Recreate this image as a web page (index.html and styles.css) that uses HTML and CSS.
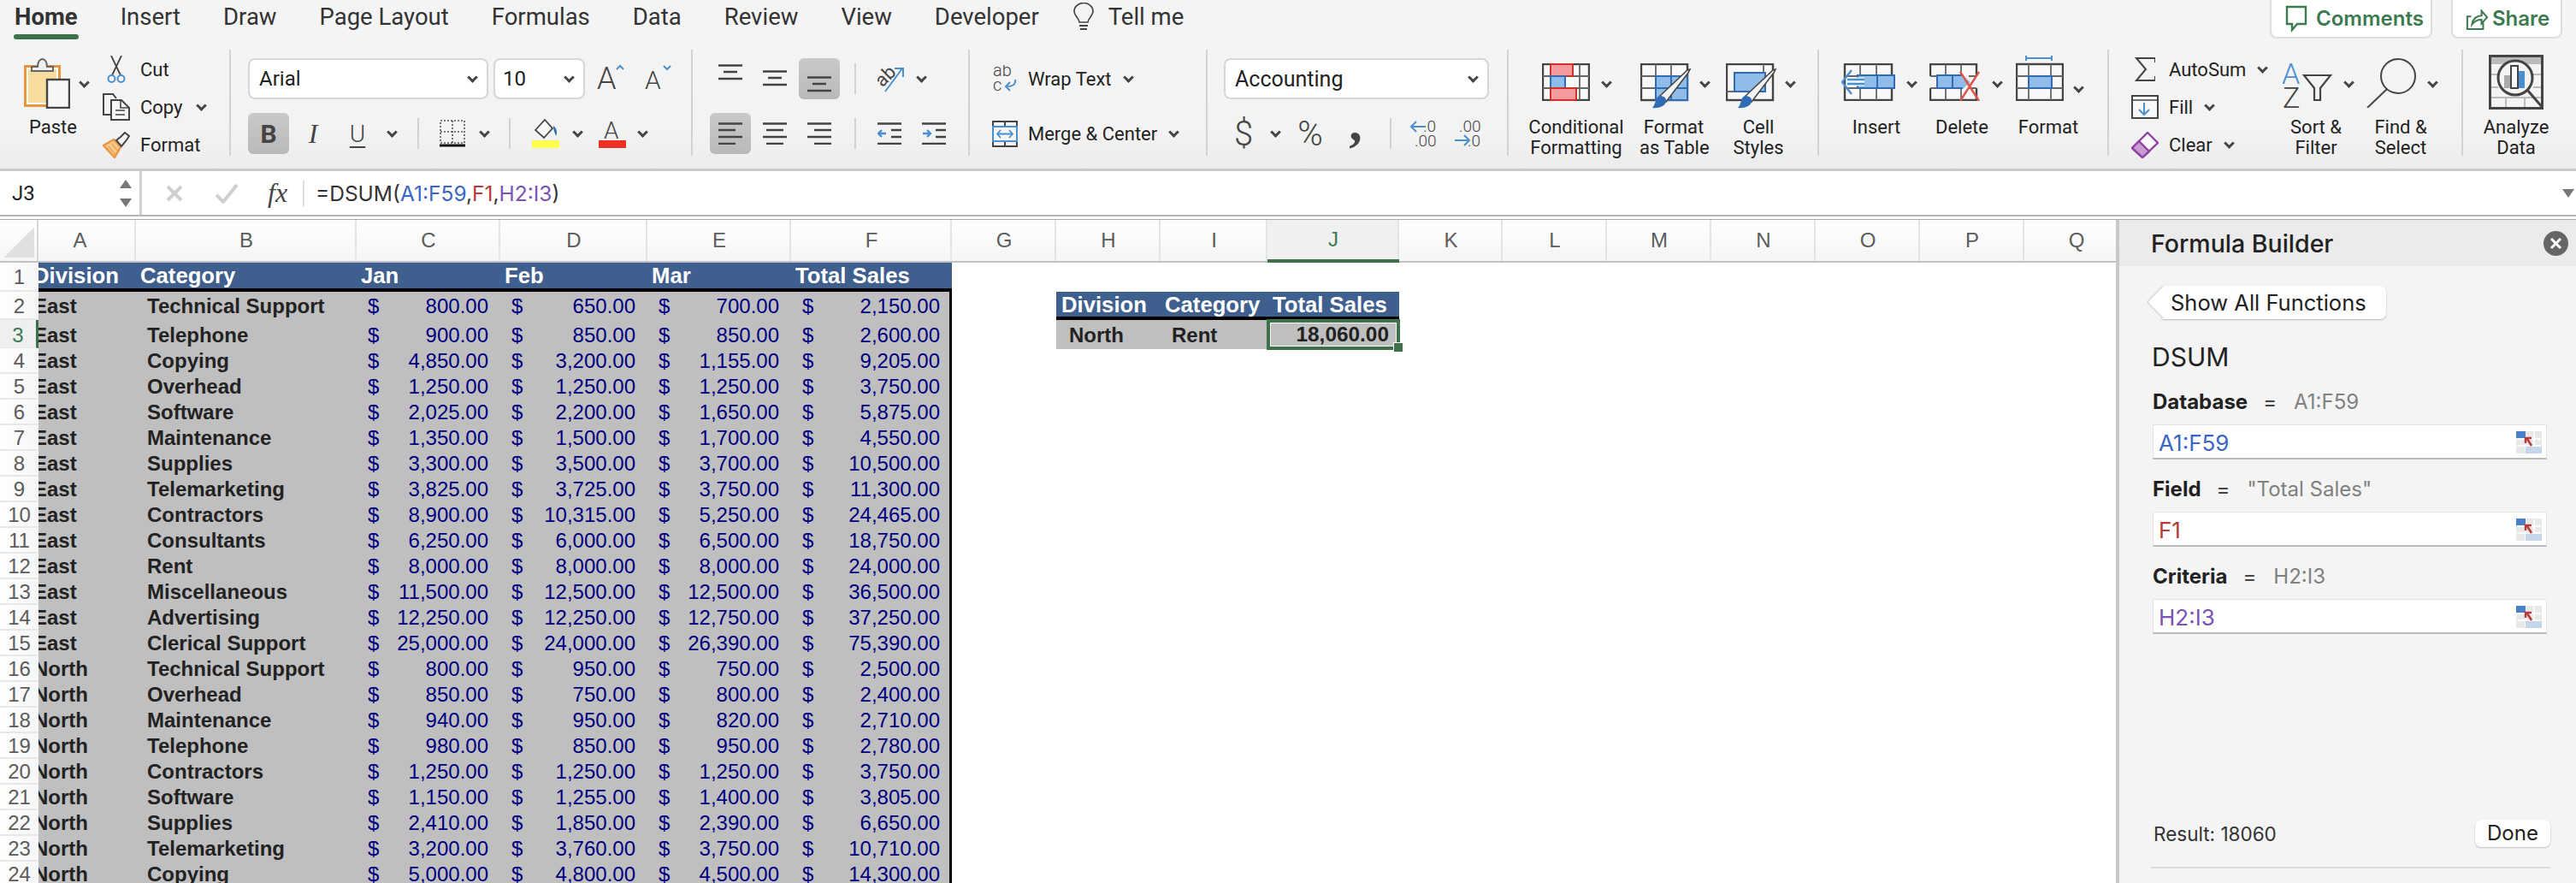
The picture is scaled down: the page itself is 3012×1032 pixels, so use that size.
FILE: index.html
```html
<!DOCTYPE html>
<html lang="en">
<head>
  <meta charset="UTF-8">
  <title>Excel - Formula Builder</title>
  <link rel="stylesheet" href="styles.css">
</head>
<body>
<div class="app">

  <!-- tabs -->
  <div class="tabs">
    <span class="tab active">Home</span>
    <span class="tab">Insert</span>
    <span class="tab">Draw</span>
    <span class="tab">Page Layout</span>
    <span class="tab">Formulas</span>
    <span class="tab">Data</span>
    <span class="tab">Review</span>
    <span class="tab">View</span>
    <span class="tab">Developer</span>
    <span class="tell">
      <svg width="26" height="34" viewBox="0 0 26 34" fill="none" stroke="#444" stroke-width="1.6"><path d="M8 23c0-5-6-7-6-13a11 9.5 0 0 1 22 0c0 6-6 8-6 13z"/><path d="M8 27h10M9 31h8" stroke-width="2"/></svg>
      <span class="tab">Tell me</span>
    </span>
    <span class="top-btn btn-comments">
      <svg width="26" height="32" viewBox="0 0 26 32" fill="none" stroke="#3c7a4f" stroke-width="2.4"><path d="M2 2h22v20H14l-6 7v-7H2z"/></svg>Comments
    </span>
    <span class="top-btn btn-share">
      <svg width="26" height="32" viewBox="0 0 28 32" fill="none" stroke="#3c7a4f" stroke-width="2.2"><path d="M7 13H2v16h20v-8M8 23c1-8 7-11 12-11V6l7 8-7 8v-5c-5 0-9 2-12 6z"/></svg>Share
    </span>
  </div>

  <!-- ribbon -->
  <div class="ribbon">

    <div class="group g-clip">
      <div class="big t-paste">
        <div class="big-top">
          <svg width="54" height="59" viewBox="0 0 54 59"><rect x="1.5" y="9.5" width="40" height="46" fill="#fff" stroke="#e8953f" stroke-width="3"/><rect x="5" y="13" width="33" height="39" fill="#f8dd9f"/><path d="M9 15v-5h7c0-12 11-12 11 0h7v5z" fill="#eee" stroke="#666" stroke-width="2"/><rect x="27" y="25" width="26" height="33" fill="#f6f6f6" stroke="#444" stroke-width="2.4"/></svg>
          <i class="chev c-paste"></i>
        </div>
        <div class="big-label">Paste</div>
      </div>
      <div class="stack s-clip">
        <div class="line">
          <span class="ibox"><svg width="22" height="33" viewBox="0 0 22 33" fill="none"><path d="M5 0l11 23M17 0L6 23" stroke="#444" stroke-width="1.8"/><circle cx="5.5" cy="27" r="4" stroke="#4a90d0" stroke-width="2"/><circle cx="16.5" cy="27" r="4" stroke="#4a90d0" stroke-width="2"/></svg></span>
          <span>Cut</span>
        </div>
        <div class="line">
          <span class="ibox"><svg width="32" height="32" viewBox="0 0 32 32" fill="none" stroke="#444" stroke-width="2"><path d="M10 25H1V1h11l4 5"/><path d="M10 8h12l9 9v14H10z" fill="#f8f8f8"/><path d="M21 8v9h10M15 20h11M15 25h11" stroke-width="1.6"/></svg></span>
          <span>Copy</span><i class="chev c-near"></i>
        </div>
        <div class="line">
          <span class="ibox"><svg width="32" height="31" viewBox="0 0 32 31" fill="none"><path d="M1 16L13 9l8 9-7 12z" fill="#f6c98a" stroke="#e8953f" stroke-width="2.4"/><path d="M7 17l8 10M11 14l7 9" stroke="#e8953f" stroke-width="1.2"/><path d="M16 10l5-4 5-5 5 4-4 6-5 6z" fill="#f4f4f4" stroke="#444" stroke-width="2"/></svg></span>
          <span>Format</span>
        </div>
      </div>
    </div>

    <div class="group g-font">
      <div class="row2">
        <div class="select sel-font">Arial<i class="chev c-sel"></i></div>
        <div class="select sel-size">10<i class="chev c-sel"></i></div>
        <svg class="grow" width="32" height="40" viewBox="0 0 32 40"><text x="0" y="32" class="svg-a a-big">A</text><path d="M23 9l4-4 4 4" fill="none" stroke="#4a90d0" stroke-width="2"/></svg>
        <svg class="shrink" width="32" height="40" viewBox="0 0 32 40"><text x="0" y="32" class="svg-a a-small">A</text><path d="M22 5l4 4 4-4" fill="none" stroke="#4a90d0" stroke-width="2"/></svg>
      </div>
      <div class="row2 row-low">
        <span class="tbtn on fmt-b">B</span>
        <span class="tbtn fmt-i">I</span>
        <span class="tbtn fmt-u">U</span>
        <i class="chev c-u"></i>
        <i class="sep s-a"></i>
        <svg class="i-border" width="30" height="32" viewBox="0 0 30 32" fill="none"><path d="M1 1h28v26H1zM15 1v26M1 14h28" stroke="#555" stroke-width="1.6" stroke-dasharray="2 2"/><path d="M0 30h30" stroke="#111" stroke-width="3"/></svg>
        <i class="chev c-b"></i>
        <i class="sep s-b"></i>
        <svg class="i-fill" width="32" height="34" viewBox="0 0 32 34" fill="none"><path d="M4 13L15 1l9 10-10 11z" stroke="#444" stroke-width="1.8" fill="#f8f8f8"/><path d="M25 8c4 3 5 8 3 12-1-4-3-6-3-12z" fill="#2f6cb3"/><rect y="25" width="32" height="9" fill="#ffff4d"/></svg>
        <i class="chev c-f"></i>
        <svg class="i-color" width="32" height="34" viewBox="0 0 32 34"><text x="6" y="23" class="svg-a a-col">A</text><rect y="25" width="32" height="9" fill="#ee3124"/></svg>
        <i class="chev c-c"></i>
      </div>
    </div>

    <div class="group g-align">
      <div class="row2">
        <span class="tbtn"><svg class="lines i-top" width="28" height="20" viewBox="0 0 28 20"><path d="M0 1.5h28M6 9h16M0 17h28"/></svg></span>
        <span class="tbtn"><svg class="lines" width="28" height="20" viewBox="0 0 28 20"><path d="M0 1.5h28M6 9h16M0 17h28"/></svg></span>
        <span class="tbtn on i-bottom"><svg class="lines" width="28" height="20" viewBox="0 0 28 20"><path d="M0 1.5h28M6 9h16M0 17h28"/></svg></span>
        <i class="sep s-c"></i>
        <svg class="i-orient" width="34" height="32" viewBox="0 0 34 32" fill="none"><text x="0" y="20" class="svg-a a-orient" transform="rotate(-45 12 14)">ab</text><path d="M11 31L31 4M22 4h10v10" stroke="#4a90d0" stroke-width="2"/></svg>
        <i class="chev c-o"></i>
      </div>
      <div class="row2 row-low">
        <span class="tbtn on"><svg class="lines" width="28" height="26" viewBox="0 0 28 26"><path d="M0 1.5h28M0 9h20M0 17h28M0 25h20"/></svg></span>
        <span class="tbtn"><svg class="lines" width="28" height="26" viewBox="0 0 28 26"><path d="M0 1.5h28M4 9h20M0 17h28M4 25h20"/></svg></span>
        <span class="tbtn"><svg class="lines" width="28" height="26" viewBox="0 0 28 26"><path d="M0 1.5h28M8 9h20M0 17h28M8 25h20"/></svg></span>
        <i class="sep s-c"></i>
        <span class="tbtn t-out"><svg class="lines" width="28" height="26" viewBox="0 0 28 26"><path d="M0 1.5h28M16 9h12M16 17h12M0 25h28"/><path d="M10 13H1M5 9l-4 4 4 4" stroke="#4a90d0"/></svg></span>
        <span class="tbtn"><svg class="lines" width="28" height="26" viewBox="0 0 28 26"><path d="M0 1.5h28M16 9h12M16 17h12M0 25h28"/><path d="M1 13h9M6 9l4 4-4 4" stroke="#4a90d0"/></svg></span>
      </div>
    </div>

    <div class="group g-wrap">
      <div class="row2 text-row">
        <span class="ibox"><svg width="30" height="32" viewBox="0 0 30 32" fill="none"><text x="1" y="13" class="svg-a a-wrap">ab</text><text x="1" y="30" class="svg-a a-wrap">c</text><path d="M27 17c1 6-3 8-11 8M21 20l-5 5 5 5" stroke="#4a90d0" stroke-width="2"/></svg></span>
        <span class="wrap-label">Wrap Text</span><i class="chev c-wide"></i>
      </div>
      <div class="row2 row-low text-row">
        <span class="ibox"><svg width="30" height="31" viewBox="0 0 30 31" fill="none"><path d="M1 1h28v29H1zM15 1v6M15 24v6" stroke="#444" stroke-width="2"/><rect x="1" y="7" width="28" height="17" fill="#f8f8f8" stroke="#4a90d0" stroke-width="2"/><path d="M6 15.500h18M10 11l-4 4.500 4 4.500M20 11l4 4.500-4 4.500" stroke="#4a90d0" stroke-width="1.800"/></svg></span>
        <span class="wrap-label">Merge &amp; Center</span><i class="chev c-wide"></i>
      </div>
    </div>

    <div class="group g-num">
      <div class="row2">
        <div class="select sel-num">Accounting<i class="chev c-sel"></i></div>
      </div>
      <div class="row2 row-low">
        <span class="sym s-dollar">$</span>
        <i class="chev c-d"></i>
        <span class="sym s-pct">%</span>
        <span class="sym s-comma">,</span>
        <i class="sep s-n"></i>
        <svg class="i-inc" width="36" height="34" viewBox="0 0 36 34" fill="none"><path d="M20 9H3M9 3L3 9l6 6" stroke="#4a90d0" stroke-width="2"/><text x="17" y="15" class="svg-a a-dec">.0</text><text x="7" y="32" class="svg-a a-dec">.00</text></svg>
        <svg class="i-dec" width="36" height="34" viewBox="0 0 36 34" fill="none"><text x="7" y="15" class="svg-a a-dec">.00</text><path d="M2 25h17M13 19l6 6-6 6" stroke="#4a90d0" stroke-width="2"/><text x="17" y="32" class="svg-a a-dec">.0</text></svg>
      </div>
    </div>

    <div class="group g-styles">
      <div class="big t-cond">
        <div class="big-top">
          <svg width="56" height="44" viewBox="0 0 56 44"><rect x="1" y="1" width="54" height="42" fill="#f8f8f8" stroke="#444" stroke-width="2.400"/><path d="M44 1v42M1 15h54M1 29h54" stroke="#666" stroke-width="1.800"/><rect x="10" y="1" width="26" height="14" fill="#f29a9e" stroke="#cc3326" stroke-width="2"/><rect x="10" y="15" width="17" height="14" fill="#8fbce8" stroke="#2f6cb3" stroke-width="2"/><rect x="10" y="29" width="30" height="14" fill="#f29a9e" stroke="#cc3326" stroke-width="2"/></svg>
          <i class="chev c-big"></i>
        </div>
        <div class="big-label">Conditional<br>Formatting</div>
      </div>
      <div class="big t-table">
        <div class="big-top">
          <svg class="over" width="60" height="54" viewBox="0 0 60 54"><rect x="1" y="1" width="54" height="42" fill="#f8f8f8" stroke="#444" stroke-width="2.400"/><path d="M18 1v42M36 1v42M1 15h54M1 29h54" stroke="#666" stroke-width="1.800"/><rect x="18" y="15" width="37" height="28" fill="#8fbce8" stroke="#2f6cb3" stroke-width="2"/><path d="M36 15v28M18 29h37" stroke="#2f6cb3" stroke-width="2"/><path d="M23 38L55 8l3-1-2 4-26 34z" fill="#f4f4f4" stroke="#444" stroke-width="1.500"/><path d="M22 38c6 0 9 3 8 7-1 5-9 8-16 7 4-3 3-12 8-14z" fill="#2f6cb3"/></svg>
          <i class="chev c-big c-over"></i>
        </div>
        <div class="big-label">Format<br>as Table</div>
      </div>
      <div class="big t-style">
        <div class="big-top">
          <svg class="over" width="60" height="54" viewBox="0 0 60 54"><rect x="1" y="1" width="54" height="42" fill="#f8f8f8" stroke="#444" stroke-width="2.400"/><path d="M44 1v14M1 33h10" stroke="#666" stroke-width="1.800"/><rect x="10" y="11" width="36" height="22" fill="#8fbce8" stroke="#2f6cb3" stroke-width="2"/><path d="M23 38L55 8l3-1-2 4-26 34z" fill="#f4f4f4" stroke="#444" stroke-width="1.500"/><path d="M22 38c6 0 9 3 8 7-1 5-9 8-16 7 4-3 3-12 8-14z" fill="#2f6cb3"/></svg>
          <i class="chev c-big c-over"></i>
        </div>
        <div class="big-label">Cell<br>Styles</div>
      </div>
    </div>

    <div class="group g-cells">
      <div class="big t-ins">
        <div class="big-top">
          <svg width="64" height="44" viewBox="0 0 64 44"><rect x="5" y="1" width="55" height="42" fill="#f8f8f8" stroke="#444" stroke-width="2.400"/><path d="M23 1v42M42 1v42M5 15h55M5 29h55" stroke="#666" stroke-width="1.800"/><rect x="20" y="14" width="43" height="15" fill="#8fbce8" stroke="#2f6cb3" stroke-width="2"/><path d="M43 14v15" stroke="#2f6cb3" stroke-width="2"/><path d="M28 18H13V25h15" fill="#f8f8f8" stroke="#f8f8f8" stroke-width="3"/><path d="M28 19H8M28 24H8M13 8l-11 14 11 14" fill="none" stroke="#4a90d0" stroke-width="2.400"/></svg>
          <i class="chev c-big"></i>
        </div>
        <div class="big-label">Insert</div>
      </div>
      <div class="big t-del">
        <div class="big-top">
          <svg width="60" height="44" viewBox="0 0 60 44"><path d="M1 15V1h54v14M1 29v14h54V29" fill="#f8f8f8" stroke="#444" stroke-width="2.400"/><path d="M19 1v14M37 1v14M19 29v14M37 29v14M1 15h7M1 29h7M46 15h9M46 29h9" stroke="#666" stroke-width="1.800"/><path d="M9 14h30l9 8-9 8H9z" fill="#8fbce8"/><path d="M39 14H9v15h30M27 14v15" fill="none" stroke="#2f6cb3" stroke-width="2"/><path d="M36 10l22 34M58 10L36 44" stroke="#e0524a" stroke-width="2.400"/></svg>
          <i class="chev c-big"></i>
        </div>
        <div class="big-label">Delete</div>
      </div>
      <div class="big t-fmt">
        <div class="big-top">
          <svg class="tall" width="56" height="54" viewBox="0 0 56 54"><path d="M12 1v6M42 1v6M12 4h30" stroke="#4a90d0" stroke-width="2" fill="none"/><rect x="1" y="11" width="54" height="42" fill="#f8f8f8" stroke="#444" stroke-width="2.400"/><path d="M15 11v42M41 11v42M1 25h54M1 39h54" stroke="#666" stroke-width="1.800"/><rect x="15" y="25" width="27" height="14" fill="#8fbce8" stroke="#2f6cb3" stroke-width="2"/></svg>
          <i class="chev c-big c-fmt"></i>
        </div>
        <div class="big-label">Format</div>
      </div>
    </div>

    <div class="group g-edit">
      <div class="stack s-edit">
        <div class="line">
          <span class="ibox"><svg width="24" height="28" viewBox="0 0 24 28" fill="none" stroke="#444" stroke-width="2"><path d="M24 6V1H2l11 13L2 27h22v-5"/></svg></span>
          <span>AutoSum</span><i class="chev c-wide"></i>
        </div>
        <div class="line">
          <span class="ibox"><svg width="32" height="28" viewBox="0 0 32 28" fill="none"><rect x="1" y="1" width="30" height="26" fill="#f8f8f8" stroke="#444" stroke-width="2"/><path d="M1 6h30" stroke="#444" stroke-width="1.500"/><path d="M15 9v14M9 17l6 6 6-6" stroke="#4a90d0" stroke-width="2"/></svg></span>
          <span>Fill</span><i class="chev c-wide"></i>
        </div>
        <div class="line">
          <span class="ibox"><svg width="32" height="31" viewBox="0 0 32 31"><path d="M1 19L19 1l12 12-18 17z" fill="#f8f8f8" stroke="#8e44a0" stroke-width="2.400"/><path d="M1 19l8-8 12 12-8 7z" fill="#c99ad6" stroke="#8e44a0" stroke-width="2.400"/></svg></span>
          <span>Clear</span><i class="chev c-wide"></i>
        </div>
      </div>
      <div class="big t-sort">
        <div class="big-top">
          <svg class="over" width="58" height="54" viewBox="0 0 58 54" fill="none"><text x="-1" y="24" class="svg-a a-sort-a">A</text><text x="0" y="52" class="svg-a a-sort-z">Z</text><path d="M25 14h31L44 29v14h-7V29z" stroke="#444" stroke-width="2.200"/></svg>
          <i class="chev c-big"></i>
        </div>
        <div class="big-label">Sort &amp;<br>Filter</div>
      </div>
      <div class="big t-find">
        <div class="big-top">
          <svg class="over2" width="58" height="58" viewBox="0 0 58 58" fill="none" stroke="#444" stroke-width="2"><circle cx="37" cy="21" r="20"/><path d="M24 36L1 58"/></svg>
          <i class="chev c-big"></i>
        </div>
        <div class="big-label">Find &amp;<br>Select</div>
      </div>
    </div>

    <div class="group g-ana">
      <div class="big t-ana">
        <div class="big-top">
          <svg class="over3" width="64" height="64" viewBox="0 0 64 64" fill="none"><rect x="1.500" y="1.500" width="61" height="61" fill="#f4f4f4" stroke="#444" stroke-width="3"/><rect x="3" y="3" width="58" height="8" fill="#bbb"/><path d="M3 23h8M3 38h8M3 50h58M52 23h9M52 38h9M20 50v11M42 50v11" stroke="#bbb" stroke-width="2"/><circle cx="31" cy="27" r="20" fill="#f4f4f4" stroke="#444" stroke-width="3"/><rect x="18" y="24" width="10" height="15" fill="#aaa"/><rect x="33" y="19" width="9" height="20" fill="#4a90d0"/><rect x="26" y="13" width="8" height="26" fill="#f8f8f8" stroke="#444" stroke-width="2"/><path d="M45 41l19 22" stroke="#444" stroke-width="3"/></svg>
        </div>
        <div class="big-label">Analyze<br>Data</div>
      </div>
    </div>
  </div>

  <!-- formula bar -->
  <div class="fbar">
    <div class="namebox">
      <span>J3</span>
      <span class="spin"><i class="tri up"></i><i class="tri down"></i></span>
    </div>
    <svg class="fb-x" width="20" height="20" viewBox="0 0 20 20" fill="none" stroke="#cfcfcf" stroke-width="4"><path d="M2 2l16 16M18 2L2 18"/></svg>
    <svg class="fb-ok" width="28" height="24" viewBox="0 0 28 24" fill="none" stroke="#cfcfcf" stroke-width="4"><path d="M2 14l8 8L26 2"/></svg>
    <span class="fb-fx">fx</span>
    <span class="formula">=DSUM(<span class="ref-a">A1:F59</span>,<span class="ref-f">F1</span>,<span class="ref-h">H2:I3</span>)</span>
    <i class="tri down fb-more"></i>
  </div>

  <div class="workspace">
    <!-- sheet -->
    <div class="sheet">
      <div class="colhead">
        <div class="corner"><i></i></div>
        <div class="ch ch-a">A</div><div class="ch">B</div><div class="ch">C</div><div class="ch">D</div><div class="ch">E</div><div class="ch">F</div><div class="ch">G</div><div class="ch">H</div><div class="ch">I</div><div class="ch cur">J</div><div class="ch">K</div><div class="ch">L</div><div class="ch">M</div><div class="ch">N</div><div class="ch">O</div><div class="ch">P</div><div class="ch">Q</div>
      </div>

      <div class="row r1"><div class="rh">1</div><div class="hd a">Division</div><div class="hd b">Category</div><div class="hd">Jan</div><div class="hd">Feb</div><div class="hd">Mar</div><div class="hd last">Total Sales</div></div>

      <div class="row r2"><div class="rh">2</div><div class="a">East</div><div class="b">Technical Support</div><div class="m"><span>$</span>800.00</div><div class="m"><span>$</span>650.00</div><div class="m"><span>$</span>700.00</div><div class="m t"><span>$</span>2,150.00</div><div class="hd crit-h colh">Division</div><div class="hd crit-c">Category</div><div class="hd crit-t">Total Sales</div></div>
      <div class="row r3"><div class="rh cur">3</div><div class="a">East</div><div class="b">Telephone</div><div class="m"><span>$</span>900.00</div><div class="m"><span>$</span>850.00</div><div class="m"><span>$</span>850.00</div><div class="m t"><span>$</span>2,600.00</div><div class="crit colh">North</div><div class="crit crit-r">Rent</div><div class="crit crit-v">18,060.00<i class="handle"></i></div></div>
      <div class="row"><div class="rh">4</div><div class="a">East</div><div class="b">Copying</div><div class="m"><span>$</span>4,850.00</div><div class="m"><span>$</span>3,200.00</div><div class="m"><span>$</span>1,155.00</div><div class="m t"><span>$</span>9,205.00</div></div>
      <div class="row"><div class="rh">5</div><div class="a">East</div><div class="b">Overhead</div><div class="m"><span>$</span>1,250.00</div><div class="m"><span>$</span>1,250.00</div><div class="m"><span>$</span>1,250.00</div><div class="m t"><span>$</span>3,750.00</div></div>
      <div class="row"><div class="rh">6</div><div class="a">East</div><div class="b">Software</div><div class="m"><span>$</span>2,025.00</div><div class="m"><span>$</span>2,200.00</div><div class="m"><span>$</span>1,650.00</div><div class="m t"><span>$</span>5,875.00</div></div>
      <div class="row"><div class="rh">7</div><div class="a">East</div><div class="b">Maintenance</div><div class="m"><span>$</span>1,350.00</div><div class="m"><span>$</span>1,500.00</div><div class="m"><span>$</span>1,700.00</div><div class="m t"><span>$</span>4,550.00</div></div>
      <div class="row"><div class="rh">8</div><div class="a">East</div><div class="b">Supplies</div><div class="m"><span>$</span>3,300.00</div><div class="m"><span>$</span>3,500.00</div><div class="m"><span>$</span>3,700.00</div><div class="m t"><span>$</span>10,500.00</div></div>
      <div class="row"><div class="rh">9</div><div class="a">East</div><div class="b">Telemarketing</div><div class="m"><span>$</span>3,825.00</div><div class="m"><span>$</span>3,725.00</div><div class="m"><span>$</span>3,750.00</div><div class="m t"><span>$</span>11,300.00</div></div>
      <div class="row"><div class="rh">10</div><div class="a">East</div><div class="b">Contractors</div><div class="m"><span>$</span>8,900.00</div><div class="m"><span>$</span>10,315.00</div><div class="m"><span>$</span>5,250.00</div><div class="m t"><span>$</span>24,465.00</div></div>
      <div class="row"><div class="rh">11</div><div class="a">East</div><div class="b">Consultants</div><div class="m"><span>$</span>6,250.00</div><div class="m"><span>$</span>6,000.00</div><div class="m"><span>$</span>6,500.00</div><div class="m t"><span>$</span>18,750.00</div></div>
      <div class="row"><div class="rh">12</div><div class="a">East</div><div class="b">Rent</div><div class="m"><span>$</span>8,000.00</div><div class="m"><span>$</span>8,000.00</div><div class="m"><span>$</span>8,000.00</div><div class="m t"><span>$</span>24,000.00</div></div>
      <div class="row"><div class="rh">13</div><div class="a">East</div><div class="b">Miscellaneous</div><div class="m"><span>$</span>11,500.00</div><div class="m"><span>$</span>12,500.00</div><div class="m"><span>$</span>12,500.00</div><div class="m t"><span>$</span>36,500.00</div></div>
      <div class="row"><div class="rh">14</div><div class="a">East</div><div class="b">Advertising</div><div class="m"><span>$</span>12,250.00</div><div class="m"><span>$</span>12,250.00</div><div class="m"><span>$</span>12,750.00</div><div class="m t"><span>$</span>37,250.00</div></div>
      <div class="row"><div class="rh">15</div><div class="a">East</div><div class="b">Clerical Support</div><div class="m"><span>$</span>25,000.00</div><div class="m"><span>$</span>24,000.00</div><div class="m"><span>$</span>26,390.00</div><div class="m t"><span>$</span>75,390.00</div></div>
      <div class="row"><div class="rh">16</div><div class="a">North</div><div class="b">Technical Support</div><div class="m"><span>$</span>800.00</div><div class="m"><span>$</span>950.00</div><div class="m"><span>$</span>750.00</div><div class="m t"><span>$</span>2,500.00</div></div>
      <div class="row"><div class="rh">17</div><div class="a">North</div><div class="b">Overhead</div><div class="m"><span>$</span>850.00</div><div class="m"><span>$</span>750.00</div><div class="m"><span>$</span>800.00</div><div class="m t"><span>$</span>2,400.00</div></div>
      <div class="row"><div class="rh">18</div><div class="a">North</div><div class="b">Maintenance</div><div class="m"><span>$</span>940.00</div><div class="m"><span>$</span>950.00</div><div class="m"><span>$</span>820.00</div><div class="m t"><span>$</span>2,710.00</div></div>
      <div class="row"><div class="rh">19</div><div class="a">North</div><div class="b">Telephone</div><div class="m"><span>$</span>980.00</div><div class="m"><span>$</span>850.00</div><div class="m"><span>$</span>950.00</div><div class="m t"><span>$</span>2,780.00</div></div>
      <div class="row"><div class="rh">20</div><div class="a">North</div><div class="b">Contractors</div><div class="m"><span>$</span>1,250.00</div><div class="m"><span>$</span>1,250.00</div><div class="m"><span>$</span>1,250.00</div><div class="m t"><span>$</span>3,750.00</div></div>
      <div class="row"><div class="rh">21</div><div class="a">North</div><div class="b">Software</div><div class="m"><span>$</span>1,150.00</div><div class="m"><span>$</span>1,255.00</div><div class="m"><span>$</span>1,400.00</div><div class="m t"><span>$</span>3,805.00</div></div>
      <div class="row"><div class="rh">22</div><div class="a">North</div><div class="b">Supplies</div><div class="m"><span>$</span>2,410.00</div><div class="m"><span>$</span>1,850.00</div><div class="m"><span>$</span>2,390.00</div><div class="m t"><span>$</span>6,650.00</div></div>
      <div class="row"><div class="rh">23</div><div class="a">North</div><div class="b">Telemarketing</div><div class="m"><span>$</span>3,200.00</div><div class="m"><span>$</span>3,760.00</div><div class="m"><span>$</span>3,750.00</div><div class="m t"><span>$</span>10,710.00</div></div>
      <div class="row"><div class="rh">24</div><div class="a">North</div><div class="b">Copying</div><div class="m"><span>$</span>5,000.00</div><div class="m"><span>$</span>4,800.00</div><div class="m"><span>$</span>4,500.00</div><div class="m t"><span>$</span>14,300.00</div></div>
    </div>

    <!-- formula builder -->
    <div class="panel">
      <div class="panel-head">
        <span class="panel-title">Formula Builder</span>
        <svg width="29" height="29" viewBox="0 0 29 29"><circle cx="14.500" cy="14.500" r="14.500" fill="#666"/><path d="M9 9l11 11M20 9L9 20" stroke="#fff" stroke-width="3"/></svg>
      </div>
      <div class="panel-body">
        <div class="show-all">Show All Functions</div>
        <div class="fn-name">DSUM</div>

        <div class="arg"><b>Database</b><span class="eq">=</span><span class="val">A1:F59</span></div>
        <div class="inp ref-a">A1:F59
          <svg class="picker" width="30" height="26" viewBox="0 0 30 26"><rect width="30" height="26" fill="#e8e8e8"/><path d="M1 9h28M1 17h28M11 1v24M21 1v24" stroke="#fff" stroke-width="1.500"/><rect width="11" height="8" fill="#4a80c8"/><rect x="11" y="18" width="19" height="8" fill="#c5d6ea"/><path d="M18 17l-5-8M11 14V8h7" fill="none" stroke="#b83a3a" stroke-width="2.500"/></svg>
        </div>

        <div class="arg"><b>Field</b><span class="eq">=</span><span class="val">"Total Sales"</span></div>
        <div class="inp ref-f">F1
          <svg class="picker" width="30" height="26" viewBox="0 0 30 26"><rect width="30" height="26" fill="#e8e8e8"/><path d="M1 9h28M1 17h28M11 1v24M21 1v24" stroke="#fff" stroke-width="1.500"/><rect width="11" height="8" fill="#4a80c8"/><rect x="11" y="18" width="19" height="8" fill="#c5d6ea"/><path d="M18 17l-5-8M11 14V8h7" fill="none" stroke="#b83a3a" stroke-width="2.500"/></svg>
        </div>

        <div class="arg"><b>Criteria</b><span class="eq">=</span><span class="val">H2:I3</span></div>
        <div class="inp ref-h">H2:I3
          <svg class="picker" width="30" height="26" viewBox="0 0 30 26"><rect width="30" height="26" fill="#e8e8e8"/><path d="M1 9h28M1 17h28M11 1v24M21 1v24" stroke="#fff" stroke-width="1.500"/><rect width="11" height="8" fill="#4a80c8"/><rect x="11" y="18" width="19" height="8" fill="#c5d6ea"/><path d="M18 17l-5-8M11 14V8h7" fill="none" stroke="#b83a3a" stroke-width="2.500"/></svg>
        </div>

        <div class="panel-foot">
          <span class="result">Result: 18060</span>
          <span class="done">Done</span>
        </div>
      </div>
    </div>
  </div>
</div>
</body>
</html>
```

FILE: styles.css
```css
* { box-sizing: border-box; }

html, body {
  margin: 0;
  width: 3012px;
  height: 1032px;
  overflow: hidden;
  background: #fff;
}

.app {
  display: flex;
  flex-direction: column;
  height: 1032px;
  font-family: Roboto, "Liberation Sans", sans-serif;
  color: #222;
}

i { display: block; font-style: normal; }

/* tabs */
.tabs {
  display: flex;
  align-items: flex-start;
  gap: 50px;
  height: 46px;
  padding-left: 17px;
  background: #f4f4f4;
}
.tab {
  font-size: 27.5px;
  line-height: 39px;
  color: #333;
}
.tab.active {
  position: relative;
  font-weight: 700;
}
.tab.active::after {
  content: "";
  position: absolute;
  left: -1px;
  right: -1px;
  top: 40px;
  height: 6px;
  border-radius: 3px;
  background: #3c7149;
}
.tell {
  display: flex;
  align-items: flex-start;
  gap: 16px;
  margin-left: -11px;
}
.tell svg { margin-top: 3px; }

.top-btn {
  display: flex;
  align-items: center;
  height: 45px;
  background: #fff;
  border: 2px solid #ddd;
  border-top: 0;
  border-radius: 0 0 8px 8px;
  color: #3c7a4f;
  font-size: 24px;
  font-weight: 600;
  font-family: Inter, sans-serif;
}
.btn-comments { width: 190px; margin-left: auto; padding-left: 16px; gap: 10px; }
.btn-share { width: 130px; margin-left: -28px; margin-right: 16px; padding-left: 15px; gap: 5px; }

/* ribbon */
.ribbon {
  display: flex;
  align-items: flex-start;
  height: 154px;
  padding-top: 12px;
  background: linear-gradient(#f4f4f4, #f3f3f3 70%, #ececec);
  border-bottom: 3px solid #c9c9c9;
  font-size: 22px;
}
.group {
  height: 124px;
  border-right: 2px solid #d2d2d2;
  flex: none;
}
.g-clip { width: 270px; padding-left: 28px; display: flex; }
.g-font { width: 540px; padding: 10px 0 0 20px; }
.g-align { width: 324px; padding: 10px 0 0 20px; }
.g-wrap { width: 278px; padding: 10px 0 0 25px; }
.g-num { width: 352px; padding: 10px 0 0 19px; }
.g-styles { width: 363px; padding-left: 17px; display: flex; }
.g-cells { width: 339px; padding-left: 25px; display: flex; }
.g-edit { width: 414px; padding-left: 26px; display: flex; }
.g-ana { width: 133px; border-right: 0; padding-left: 12px; display: flex; }

.row2 { display: flex; align-items: center; height: 48px; }
.row-low { margin-top: 16px; }
.text-row .ibox { width: 32px; margin-right: 11px; display: flex; justify-content: center; }
.wrap-label { font-size: 22px; }

.big { flex: none; }
.big-top {
  display: flex;
  align-items: center;
  height: 76px;
}
.big-label {
  text-align: center;
  line-height: 24px;
  padding-top: 3px;
  white-space: nowrap;
}
.over { align-self: flex-start; margin-top: 16px; margin-bottom: -6px; }
.over2 { align-self: flex-start; margin-top: 10px; }
.over3 { align-self: flex-start; margin-top: 6px; }
.tall { align-self: flex-start; margin-top: 6px; }
.big svg { flex: none; }

.t-paste { width: 68px; }
.t-paste .big-top svg { margin-top: 2px; }
.t-cond { width: 124px; }
.t-cond .big-top { padding-left: 22px; }
.t-table { width: 80px; margin-left: 12px; }
.t-table .big-top { padding-left: 1px; }
.t-style { width: 80px; margin-left: 19px; }
.t-style .big-top { padding-left: 2px; }
.t-ins { width: 84px; }
.t-del { width: 80px; margin-left: 18px; }
.t-del .big-top { padding-left: 2px; }
.t-fmt { width: 80px; margin-left: 21px; }
.t-fmt .big-top { padding-left: 2px; }
.t-sort { width: 78px; }
.t-find { width: 80px; margin-left: 20px; }
.t-ana { width: 100px; }
.t-ana .big-top { justify-content: center; }

.stack { flex: none; padding-top: 1px; }
.s-clip { margin-left: 24px; }
.s-edit { width: 177px; }
.line { display: flex; align-items: center; height: 44px; }
.ibox { width: 32px; margin-right: 12px; display: flex; justify-content: center; flex: none; }

/* chevrons */
.chev {
  width: 9px;
  height: 9px;
  flex: none;
  border: solid #444;
  border-width: 0 3px 3px 0;
  transform: rotate(45deg);
  position: relative;
  top: -2px;
}
.c-paste { margin-left: 12px; top: 0; }
.c-near { margin-left: 17px; }
.c-wide { margin-left: 15px; }
.c-big { margin-left: 15px; top: 0; }
.c-over { margin-left: 11px; }
.c-fmt { margin-left: 13px; margin-top: 12px; }
.c-sel { margin-left: auto; }
.c-u { margin-left: 8px; }
.c-b { margin-left: 18px; }
.c-f { margin-left: 17px; }
.c-c { margin-left: 15px; }
.c-o { margin-left: 15px; }
.c-d { margin-left: 17px; }

/* controls */
.select {
  display: flex;
  align-items: center;
  height: 48px;
  padding: 0 12px;
  background: #fff;
  border: 2px solid #d6d6d6;
  border-radius: 8px;
  font-size: 24px;
  color: #222;
}
.sel-font { width: 281px; padding-left: 11px; }
.sel-size { width: 107px; margin-left: 6px; padding-left: 9px; }
.sel-num { width: 310px; padding-left: 11px; font-size: 25px; }
.grow { margin-left: 14px; }
.shrink { margin-left: 24px; }

.tbtn {
  display: flex;
  align-items: center;
  justify-content: center;
  width: 48px;
  height: 48px;
  margin-right: 4px;
  border-radius: 6px;
  color: #444;
  flex: none;
}
.tbtn.on { background: linear-gradient(#c9c9c9, #b9b9b9); }
.i-top { margin-bottom: 14px; }
.i-bottom svg { margin-top: 13px; }
.fmt-b { font: 700 30px Roboto, sans-serif; }
.fmt-i { font: italic 400 32px "Liberation Serif", serif; }
.fmt-u { font-size: 28px; font-weight: 300; text-decoration: underline; text-underline-offset: 5px; }

.sep { width: 2px; height: 36px; background: #d2d2d2; flex: none; }
.s-a { margin-left: 25px; }
.s-b { margin-left: 24px; }
.s-c { margin-left: 13px; }
.s-n { margin-left: 22px; }
.t-out { margin-left: 15px; }
.i-border { margin-left: 24px; }
.i-fill { margin-left: 25px; }
.i-color { margin-left: 20px; }
.i-orient { margin-left: 23px; }
.i-inc { margin-left: 20px; }
.i-dec { margin-left: 16px; }

.lines { fill: none; stroke: #444; stroke-width: 2.4; }

.sym { text-align: center; color: #444; flex: none; }
.s-dollar { width: 32px; margin-left: 7px; font-size: 40px; font-weight: 300; }
.s-pct { width: 38px; margin-left: 17px; font-size: 40px; font-weight: 300; }
.s-comma { width: 36px; margin: 0 0 26px 16px; font: 700 62px/20px "Liberation Serif", serif; height: 20px; }

.svg-a { font-family: Roboto, sans-serif; fill: #444; font-weight: 300; }
.a-big { font-size: 36px; }
.a-small { font-size: 30px; }
.a-col { font-size: 28px; font-weight: 300; }
.a-orient { font-size: 22px; font-weight: 400; }
.a-wrap { font-size: 20px; }
.a-dec { font-size: 19px; }
.a-sort-a { font-size: 34px; fill: #4a90d0; }
.a-sort-z { font-size: 34px; }

/* formula bar */
.fbar {
  display: flex;
  align-items: center;
  height: 57px;
  padding-bottom: 4px;
  background: #fff;
  border-bottom: 1px solid #aaa;
  position: relative;
}
.fbar::after {
  content: "";
  position: absolute;
  left: 0;
  right: 0;
  bottom: 3px;
  height: 2px;
  background: #b5b5b5;
}
.namebox {
  display: flex;
  align-items: center;
  justify-content: space-between;
  width: 166px;
  height: 52px;
  padding: 0 9px 0 14px;
  border-right: 3px solid #d0d0d0;
  font: 24px Roboto, sans-serif;
  flex: none;
}
.spin { display: flex; flex-direction: column; gap: 12px; }
.tri {
  width: 0;
  height: 0;
  border-left: 7px solid transparent;
  border-right: 7px solid transparent;
}
.tri.up { border-bottom: 10px solid #777; }
.tri.down { border-top: 10px solid #777; }
.fb-x { margin-left: 28px; flex: none; }
.fb-ok { margin-left: 37px; flex: none; }
.fb-fx {
  margin-left: 34px;
  width: 43px;
  height: 30px;
  border-right: 2px solid #ddd;
  font: italic 32px/28px "Liberation Serif", serif;
  color: #444;
}
.formula { margin-left: 13px; font: 24.5px Inter, sans-serif; color: #333; }
.fb-more { margin-left: auto; margin-right: 2px; }

.ref-a { color: #3a66c4; }
.ref-f { color: #b5393c; }
.ref-h { color: #7a51b5; }

/* sheet */
.workspace { display: flex; flex: 1; min-height: 0; }
.sheet {
  width: 2474px;
  flex: none;
  overflow: hidden;
  font-family: "Liberation Sans", Arial, sans-serif;
  --cols: 45px 114px 258px 168px 172px 168px 188px 122px 122px 125px 154px 121px 122px 122px 122px 122px 122px 122px;
}
.colhead {
  display: grid;
  grid-template-columns: var(--cols);
  height: 50px;
  background: linear-gradient(#fff, #f5f5f5);
  border-bottom: 2px solid #c2c2c2;
}
.corner { border-right: 2px solid #d8d8d8; padding: 8px 0 0 4px; }
.corner i {
  width: 36px;
  height: 36px;
  background: linear-gradient(135deg, transparent 50%, #e0e0e0 50%);
}
.ch {
  display: flex;
  align-items: center;
  justify-content: center;
  box-shadow: inset -2px 0 0 #e4e4e4;
  font-size: 24px;
  color: #5c5c5c;
}
.ch-a { padding-right: 17px; }
.ch.cur {
  background: #f0f0f0;
  color: #3c7a4f;
  border-bottom: 4px solid #3c7149;
  margin-bottom: -2px;
}

.row {
  display: grid;
  grid-template-columns: var(--cols);
  height: 30px;
  font-size: 24px;
  line-height: 30px;
  white-space: nowrap;
}
.r1 { height: 34px; }
.r2 { height: 33px; }
.r3 { height: 33px; }
.row > div { overflow: hidden; }
.row > :nth-child(-n+7):not(.rh):not(.hd) { background: #bfbfbf; }

.rh {
  text-align: center;
  color: #5c5c5c;
  background: linear-gradient(90deg, #fff, #f6f6f6);
  border-bottom: 2px solid #e8e8e8;
}
.rh.cur {
  background: #efefef;
  color: #3c7a4f;
  border-right: 3px solid #3c7149;
}
.r1 > div, .r2 > div, .r3 > div { line-height: 33px; }
.r3 > div { line-height: 36px; }

.a { font-weight: 700; text-indent: -6px; }
.b { font-weight: 700; padding-left: 13px; }
.m {
  display: flex;
  justify-content: space-between;
  padding: 0 14px 0 13px;
  color: #000080;
}
.m.t { border-right: 3px solid #000; padding-right: 11px; }

.row > .hd {
  background: #3f5f8e;
  color: #fff;
  font-weight: 700;
  font-size: 25.7px;
  padding-left: 5px;
  border-bottom: 4px solid #000;
  line-height: 31px;
}
.row > .hd.a { padding-left: 0; }
.colh { grid-column: 9; }
.row > .crit-h { padding-left: 6px; }
.row > .crit-c { padding-left: 5px; }
.row > .crit-t { padding-left: 6px; }

.row > .crit { background: #bfbfbf; font-weight: 700; padding-left: 15px; }
.row > .crit.crit-r { padding-left: 13px; }
.row > .crit-v {
  padding: 0 12px 0 0;
  text-align: right;
  font-size: 24.4px;
  position: relative;
  overflow: visible;
  line-height: 34px;
  outline: 4px solid #3c7149;
  outline-offset: -3px;
  box-shadow: inset 0 0 0 4px #fff;
}
.handle {
  position: absolute;
  right: -4px;
  bottom: -3px;
  width: 10px;
  height: 10px;
  background: #3c7149;
  box-shadow: 0 0 0 1px #fff;
}

/* panel */
.panel {
  flex: 1;
  display: flex;
  flex-direction: column;
  background: #f4f4f4;
  border-left: 4px solid #c8c8c8;
  font-family: Inter, sans-serif;
}
.panel-head {
  display: flex;
  align-items: center;
  justify-content: space-between;
  height: 54px;
  padding: 0 9px 0 37px;
  background: #ebebeb;
}
.panel-title { font-size: 28.5px; font-weight: 500; color: #222; }
.panel-body {
  flex: 1;
  display: flex;
  flex-direction: column;
  padding: 23px 30px 17px 39px;
}
.show-all {
  position: relative;
  isolation: isolate;
  align-self: flex-start;
  height: 39px;
  margin-left: 11px;
  padding: 0 23px 0 10px;
  background: #fff;
  border-radius: 0 7px 7px 0;
  box-shadow: 0 1px 2px #bbb;
  font-size: 25.5px;
  line-height: 40px;
  color: #222;
}
.show-all::before {
  content: "";
  position: absolute;
  left: -11px;
  top: 5px;
  width: 28px;
  height: 28px;
  background: #fff;
  transform: rotate(45deg);
  border-radius: 3px;
  box-shadow: -1px 1px 1px #ccc;
  z-index: -1;
}
.fn-name {
  height: 40px;
  margin: 24px 0 0 -1px;
  font-size: 30px;
  line-height: 40px;
  color: #222;
}
.arg {
  display: flex;
  align-items: center;
  height: 30px;
  margin-top: 19px;
  font-size: 24px;
}
.fn-name + .arg { margin-top: 17px; }
.arg b { font-weight: 700; color: #222; }
.eq { margin-left: 18px; color: #444; }
.val { margin-left: 20px; color: #808080; }
.inp {
  display: flex;
  align-items: center;
  justify-content: space-between;
  height: 41px;
  margin-top: 12px;
  margin-right: 4px;
  padding: 2px 5px 0 6px;
  background: #fff;
  border: 1px solid #e4e4e4;
  border-bottom: 2px solid #bbb;
  font-size: 26px;
}
.panel-foot {
  display: flex;
  align-items: center;
  justify-content: space-between;
  margin: auto 0 0 -2px;
  padding-bottom: 23px;
  border-bottom: 2px solid #ddd;
}
.result { font-size: 22.5px; color: #333; padding-left: 3px; }
.done {
  width: 88px;
  height: 32px;
  background: #fff;
  border-radius: 7px;
  box-shadow: 0 1px 2px #bbb;
  text-align: center;
  font-size: 24px;
  line-height: 32px;
  color: #222;
}
```
